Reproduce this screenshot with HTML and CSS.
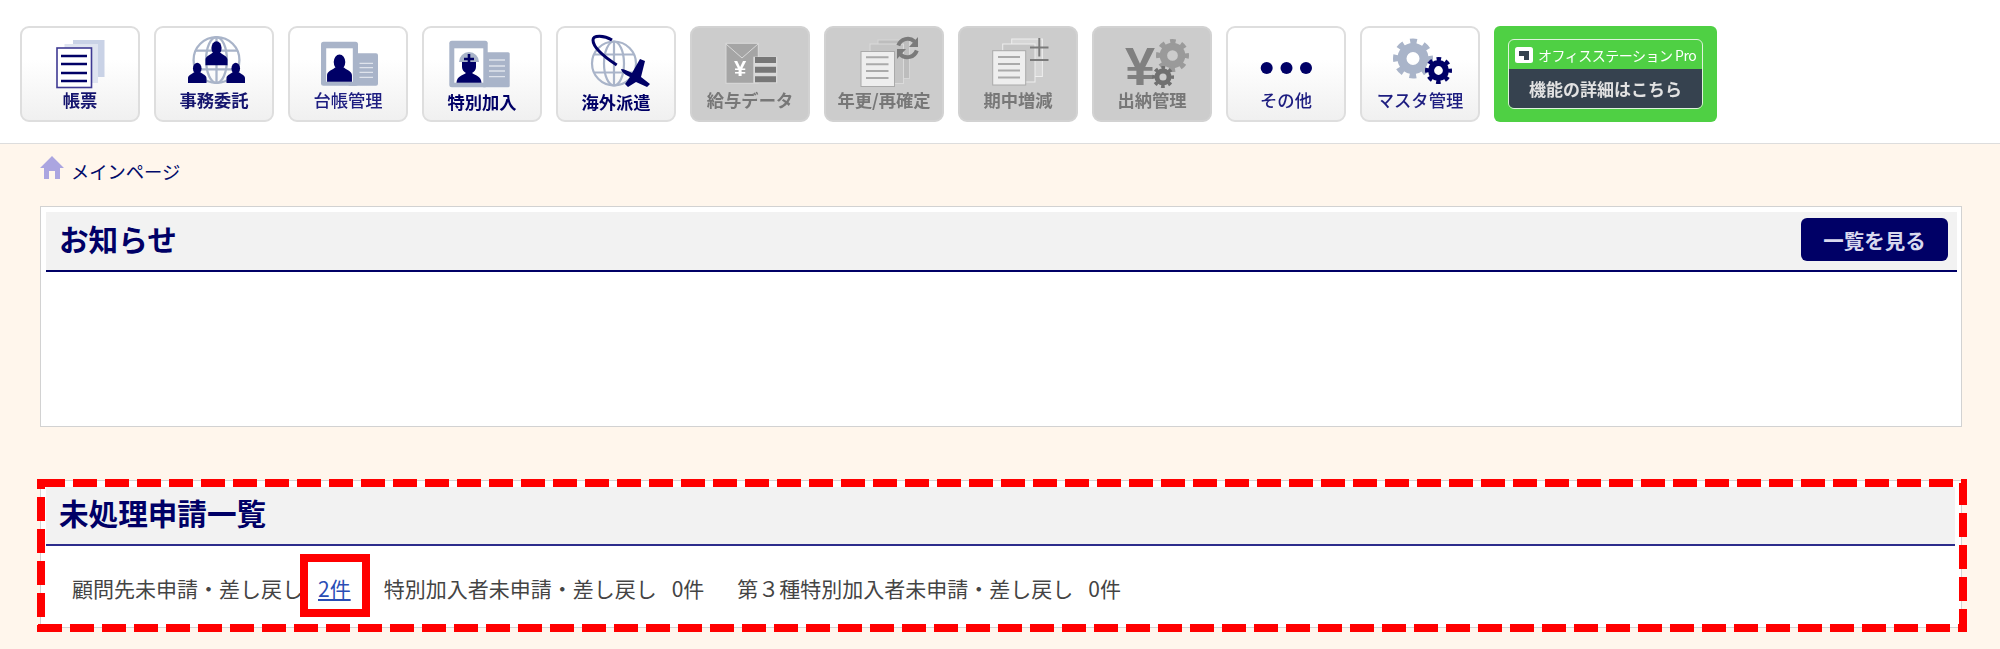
FILE: index.html
```html
<!DOCTYPE html>
<html lang="ja">
<head>
<meta charset="utf-8">
<title>メインページ</title>
<link rel="stylesheet" href="styles.css">
</head>
<body>
<svg class="defs" width="0" height="0" aria-hidden="true">
  <symbol id="gear" viewBox="-12 -12 24 24" overflow="visible">
    <circle r="6.6" fill="none" stroke="currentColor" stroke-width="5.4"/>
    <circle r="10" fill="none" stroke="currentColor" stroke-width="4" stroke-dasharray="3.93 3.92" stroke-dashoffset="1.96"/>
  </symbol>
  <symbol id="globe" viewBox="-12 -12 24 24" overflow="visible">
    <g fill="none" stroke="currentColor" stroke-width="1.1">
      <circle r="11"/><ellipse rx="5" ry="11"/><path d="M-10-4.5H10M-10 4.5H10M0-11V11"/>
    </g>
  </symbol>
  <symbol id="person" viewBox="0 0 28 30" overflow="visible">
    <ellipse cx="14" cy="8" rx="6.500" ry="8.500" fill="currentColor"/>
    <path d="M0 30V23C0 18 6 17 9 14H19C22 17 28 18 28 23V30Z" fill="currentColor"/>
  </symbol>
</svg>

<header class="topbar">
  <nav class="tiles">
    <a class="tile">
      <svg class="tile-icon" viewBox="2 2 116 62">
        <rect x="53" y="14" width="31.500" height="37" fill="#c9d2e6"/>
        <rect x="44.500" y="18" width="33.500" height="39" fill="#dfe4f0"/>
        <rect x="37" y="22" width="34.500" height="39.500" fill="#fff" stroke="#3f3a93" stroke-width="1.600"/>
        <path d="M41 30H67M41 38H67M41 47H67M41 55H67" stroke="#006" stroke-width="2.300"/>
      </svg>
      <span class="tile-label">帳票</span>
    </a>
    <a class="tile">
      <svg class="tile-icon" viewBox="2 2 116 62">
        <use href="#globe" x="37.500" y="9" width="50" height="50" class="ic-steel"/>
        <use href="#person" x="51.500" y="13.500" width="22" height="28" class="ic-navy"/>
        <use href="#person" x="34" y="35" width="18.500" height="24" class="ic-navy"/>
        <use href="#person" x="72.500" y="35" width="18.500" height="24" class="ic-navy"/>
      </svg>
      <span class="tile-label">事務委託</span>
    </a>
    <a class="tile">
      <svg class="tile-icon" viewBox="2 2 116 62">
        <rect x="60" y="27.300" width="30" height="32.400" rx="2" fill="#a9b4c9"/>
        <path d="M71.500 37.300H85M71.500 41.700H85M71.500 46.300H85M71.500 51.300H85" stroke="#dfe3ec" stroke-width="1.200"/>
        <rect x="33" y="15.700" width="37" height="44" rx="2.500" fill="#a9b4c9"/>
        <rect x="38.200" y="22.300" width="26.600" height="33.400" fill="#fff"/>
        <use href="#person" x="38.500" y="29" width="26" height="26.700" class="ic-navy"/>
      </svg>
      <span class="tile-label tile-label-thin">台帳管理</span>
    </a>
    <a class="tile">
      <svg class="tile-icon" viewBox="2 2 116 62">
        <rect x="60" y="26.300" width="27.700" height="35" rx="1.500" fill="#a9b4c9"/>
        <path d="M67 34H83M67 40H83M67 45H83M67 50.700H83" stroke="#dfe3ec" stroke-width="1.300"/>
        <rect x="27.300" y="14.700" width="38.400" height="46.600" rx="2.500" fill="#a9b4c9"/>
        <rect x="32.300" y="22.300" width="29" height="34.400" fill="#fff"/>
        <path d="M37 36A10 10 0 0 1 57 36Z" fill="#a9b4c9"/>
        <path d="M40 36H54V41C54 44 52 46 50 47C54 50 59 50 59.500 56.700H34.500C35 50 40 50 44 47C42 46 40 44 40 41Z" fill="#006"/>
        <path d="M47 28V38M42 33H52" stroke="#006" stroke-width="2.600"/>
      </svg>
      <span class="tile-label tile-label-low">特別加入</span>
    </a>
    <a class="tile">
      <svg class="tile-icon" viewBox="2 2 116 62">
        <use href="#globe" x="34" y="13.500" width="48" height="48" class="ic-steel"/>
        <path d="M60.700 39C50 32 37 22 37 14C37 9 48 9 56 14" fill="none" stroke="#006" stroke-width="3"/>
        <path d="M65 43C68 43 72 45 76 47L84 33L89 35L85 51L94 58L91 61L80 56L72 61L69 58L74 51C70 49 66 47 65 43Z" fill="#006"/>
      </svg>
      <span class="tile-label tile-label-low">海外派遣</span>
    </a>
    <a class="tile tile-off">
      <svg class="tile-icon" viewBox="2 2 116 62">
        <rect x="36" y="17.300" width="32.300" height="40" fill="#a5a5a5" stroke="#dadada"/>
        <path d="M36 18L52 32L68 18" fill="none" stroke="#dadada"/>
        <text x="50" y="50" class="yen-small">¥</text>
        <rect x="63.300" y="30.700" width="24" height="26.600" fill="#dadada"/>
        <path d="M65 34H86M65 43.800H86M65 53.300H86" stroke="#777" stroke-width="6"/>
      </svg>
      <span class="tile-label">給与データ</span>
    </a>
    <a class="tile tile-off">
      <svg class="tile-icon" viewBox="2 2 116 62">
        <rect x="54" y="14" width="31.500" height="38.500" fill="#bdbdbd" stroke="#d6d6d6"/>
        <rect x="46" y="18" width="33.500" height="39.500" fill="#c4c4c4" stroke="#dadada"/>
        <rect x="37" y="25.500" width="33.500" height="35" fill="#eee" stroke="#aaa"/>
        <path d="M42 31.300H64.500M42 38.300H64.500M42 45H64.500M42 52H64.500" stroke="#aaa" stroke-width="2"/>
        <path d="M74.300 19.500A10 10 0 0 1 90.500 15.500M92.800 24.500A10 10 0 0 1 76.500 28.500" fill="none" stroke="#7a7a7a" stroke-width="4"/>
        <path d="M94 11V21H85ZM73 33V23H82Z" fill="#7a7a7a"/>
      </svg>
      <span class="tile-label">年更/再確定</span>
    </a>
    <a class="tile tile-off">
      <svg class="tile-icon" viewBox="2 2 116 62">
        <rect x="53.700" y="13" width="30.700" height="37.500" fill="#d6d6d6" stroke="#eee"/>
        <rect x="44.700" y="18" width="32.300" height="38" fill="#c6c6c6" stroke="#eee"/>
        <rect x="34.700" y="24.700" width="33" height="34.300" fill="#eee" stroke="#aaa"/>
        <path d="M40 31H62M40 38H62M40 44.500H62M40 51.500H62" stroke="#aaa" stroke-width="2"/>
        <path d="M72 21.500H90.500M81.300 12V30.500M72 34H90.500" stroke="#7a7a7a" stroke-width="2"/>
      </svg>
      <span class="tile-label">期中増減</span>
    </a>
    <a class="tile tile-off">
      <svg class="tile-icon tile-icon-open" viewBox="2 2 116 62">
        <text x="48" y="59" class="yen-big">¥</text>
        <use href="#gear" x="64" y="13" width="33" height="33" class="ic-gear-mid"/>
        <use href="#gear" x="60" y="40" width="22" height="22" class="ic-gear-dark"/>
      </svg>
      <span class="tile-label">出納管理</span>
    </a>
    <a class="tile">
      <svg class="tile-icon" viewBox="2 2 116 62">
        <circle cx="40.700" cy="42" r="6" fill="#006"/>
        <circle cx="60.500" cy="42" r="6" fill="#006"/>
        <circle cx="80" cy="42" r="6" fill="#006"/>
      </svg>
      <span class="tile-label tile-label-thin">その他</span>
    </a>
    <a class="tile">
      <svg class="tile-icon" viewBox="2 2 116 62">
        <use href="#gear" x="33" y="12.500" width="40" height="40" class="ic-steel"/>
        <use href="#gear" x="65" y="31" width="27" height="27" class="ic-navy"/>
      </svg>
      <span class="tile-label tile-label-thin">マスタ管理</span>
    </a>
    <a class="promo">
      <span class="promo-frame">
        <span class="promo-brand">
          <svg class="promo-logo" viewBox="0 0 18 16">
            <rect width="18" height="16" rx="2.500" fill="#fff"/>
            <path d="M4 4H14V13H9V9H4Z" fill="#36424f"/>
          </svg>
          <span>オフィスステーション Pro</span>
        </span>
        <span class="promo-cta">機能の詳細はこちら</span>
      </span>
    </a>
  </nav>
</header>

<main class="page">
  <div class="crumb">
    <svg class="crumb-home" viewBox="0 0 24 24"><path d="M12 0L24 12H20V23H15V15H9V23H4V12H0Z"/></svg>
    <span>メインページ</span>
  </div>

  <section class="card card-notice">
    <div class="card-head">
      <h2 class="card-title">お知らせ</h2>
      <a class="btn-list">一覧を見る</a>
    </div>
  </section>

  <section class="card card-pending">
    <div class="card-head card-head-short">
      <h2 class="card-title card-title-small">未処理申請一覧</h2>
    </div>
    <div class="pending-row">
      <span class="pending-item">顧問先未申請・差し戻し<a class="pending-link">2件</a></span>
      <span class="pending-item">特別加入者未申請・差し戻し<span>0件</span></span>
      <span class="pending-item">第３種特別加入者未申請・差し戻し<span>0件</span></span>
    </div>
  </section>
</main>

<svg class="annotation" viewBox="0 0 2000 649" aria-hidden="true">
  <line class="dash" x1="41" y1="483" x2="1967" y2="483"/>
  <line class="dash" x1="38" y1="628" x2="1967" y2="628"/>
  <line class="dash dash-left" x1="41" y1="479" x2="41" y2="632"/>
  <line class="dash dash-right" x1="1963" y1="483" x2="1963" y2="632"/>
  <rect class="solid" x="304" y="558" width="62" height="55"/>
</svg>
</body>
</html>
```
FILE: styles.css
```css
* { box-sizing: border-box; }
html, body { margin: 0; height: 649px; overflow: hidden; }
body {
  position: relative;
  background: #fff6ec;
  font-family: "Noto Sans CJK JP", "Noto Sans", sans-serif;
  color: #444;
}
.defs { position: absolute; }

.topbar {
  height: 144px;
  background: #fff;
  border-bottom: 1px solid #ddd;
  padding: 26px 0 0 20px;
}
.tiles { display: flex; gap: 14px; }
.tile {
  width: 120px;
  height: 96px;
  display: flex;
  flex-direction: column;
  align-items: center;
  border: 2px solid #dedede;
  border-radius: 9px;
  background: linear-gradient(#fff 35%, #f0f0f0);
  color: #006;
}
.tile-icon { width: 116px; height: 62px; flex: none; filter: blur(.35px); }
.tile-icon-open { overflow: visible; }
.tile-label {
  height: 20px;
  line-height: 20px;
  font-size: 17.300px;
  font-weight: 700;
  white-space: nowrap;
  filter: blur(.45px);
  color: #14146e;
}
.tile-label-thin { font-weight: 500; color: #1d1d80; }
.tile-label-low { transform: translateY(2px); color: #006; }
.tile-off { background: #ccc; border-color: #d2d2d2; }
.tile-off .tile-label { color: #777; }

.ic-steel { color: #a9b4c9; }
.ic-navy { color: #006; }
.ic-gear-mid { color: #9a9a9a; }
.ic-gear-dark { color: #707070; }
.yen-small { font: 700 22px "Liberation Sans", sans-serif; fill: #fff; text-anchor: middle; }
.yen-big { font: 700 54px "Liberation Sans", sans-serif; fill: #808080; text-anchor: middle; }

.promo {
  width: 223px;
  height: 96px;
  padding: 13px 14px;
  background: #4fd044;
  border-radius: 6px;
}
.promo-frame {
  display: flex;
  flex-direction: column;
  height: 70px;
  border: 1.500px solid #dff3dc;
  border-radius: 6px;
  overflow: hidden;
}
.promo-brand {
  height: 29px;
  flex: none;
  display: flex;
  align-items: center;
  gap: 5px;
  padding-left: 6px;
  color: #fff;
  font-size: 14px;
  letter-spacing: -.5px;
  line-height: 1;
  white-space: nowrap;
  filter: blur(.3px);
}
.promo-logo { width: 18px; height: 16px; flex: none; }
.promo-cta {
  flex: 1;
  display: flex;
  align-items: center;
  justify-content: center;
  background: #36424f;
  color: #e2e2e2;
  font-size: 17px;
  font-weight: 700;
  filter: blur(.3px);
}

.page { padding: 0 38px 0 40px; }
.crumb {
  height: 62px;
  display: flex;
  align-items: flex-start;
  gap: 7px;
  padding-top: 12px;
  color: #000a6a;
  font-size: 18.300px;
  line-height: 30px;
}
.crumb-home { width: 24px; height: 24px; fill: #aba5e0; flex: none; }

.card {
  background: #fff;
  border: 1px solid #d2d2d2;
  padding: 5px 4px 0 5px;
}
.card-notice { height: 221px; }
.card-pending { height: 148px; margin-top: 53px; padding-top: 6px; padding-right: 6px; }
.card-head {
  display: flex;
  justify-content: space-between;
  align-items: flex-start;
  height: 60px;
  padding: 6px 9px 0 13px;
  background: #f2f2f2;
  border-bottom: 2px solid #006;
}
.card-head-short { height: 59px; padding-top: 4px; border-bottom-color: #2c2c8c; }
.card-title {
  margin: 0;
  color: #006;
  font-size: 29.600px;
  font-weight: 700;
  line-height: 42px;
}
.card-title-small { line-height: 44px; }
.btn-list {
  width: 147px;
  height: 43px;
  display: flex;
  align-items: center;
  justify-content: center;
  background: #006;
  border-radius: 6px;
  color: #d9d9ee;
  font-size: 20.500px;
  font-weight: 700;
}
.pending-row {
  display: flex;
  gap: 33px;
  padding: 26px 0 0 26px;
  font-size: 21px;
  line-height: 32px;
  white-space: nowrap;
}
.pending-item { display: flex; gap: 15px; }
.pending-link { color: #2a4db5; text-decoration: underline; }

.annotation { position: absolute; left: 0; top: 0; width: 2000px; height: 649px; pointer-events: none; }
.dash { stroke: #f00; stroke-width: 8; stroke-dasharray: 24 8; }
.dash-left { stroke-dashoffset: 14; }
.dash-right { stroke-dashoffset: 2; }
.solid { fill: none; stroke: #f00; stroke-width: 8; }
```
